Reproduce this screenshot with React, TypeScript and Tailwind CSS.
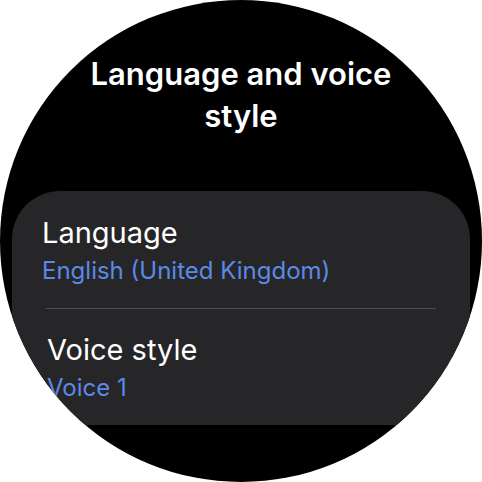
export default function App() {
  return (
    <div className="w-[482px] h-[482px] bg-white" style={{ fontFamily: "Inter, Roboto, 'Liberation Sans', sans-serif" }}>
      <div className="w-full h-full rounded-full bg-black overflow-hidden flex flex-col">
        <div className="pt-[53px] text-center text-white font-semibold text-[31px] leading-[42px]">
          Language and voice
          <br />
          style
        </div>
        <div className="mt-[54px] mx-[12px] h-[234px] rounded-t-[48px] bg-[#262628] pt-[24px]">
          <div className="pl-[30px]">
            <div className="text-white text-[29px] leading-[36px]">Language</div>
            <div className="mt-[4px] text-[#5a8ae6] text-[24px] leading-[32px]">English (United Kingdom)</div>
          </div>
          <div className="mt-[21px] mx-[34px] h-px bg-[#4f4f51]" />
          <div className="pl-[35px] mt-[23px]">
            <div className="text-white text-[29px] leading-[36px]">Voice style</div>
            <div className="mt-[4px] text-[#5a8ae6] text-[24px] leading-[32px]">Voice 1</div>
          </div>
        </div>
      </div>
    </div>
  );
}
